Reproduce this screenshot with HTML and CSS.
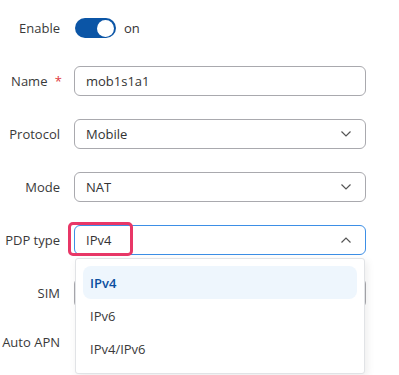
FILE: index.html
```html
<!DOCTYPE html>
<html>
<head>
<meta charset="utf-8">
<link rel="stylesheet" href="styles.css">
</head>
<body>
<div class="form">
  <div class="row">
    <div class="label">Enable</div>
    <div class="control toggle-wrap">
      <span class="toggle on"><span class="knob"></span></span>
      <span class="toggle-text">on</span>
    </div>
  </div>
  <div class="row">
    <div class="label">Name <span class="req">*</span></div>
    <div class="control"><div class="input">mob1s1a1</div></div>
  </div>
  <div class="row">
    <div class="label">Protocol</div>
    <div class="control"><div class="input select">Mobile<svg class="chev" width="10" height="6" viewBox="0 0 10 6"><path d="M0.5 0.5 L5 5 L9.5 0.5" fill="none" stroke="#555" stroke-width="1.2"/></svg></div></div>
  </div>
  <div class="row">
    <div class="label">Mode</div>
    <div class="control"><div class="input select">NAT<svg class="chev" width="10" height="6" viewBox="0 0 10 6"><path d="M0.5 0.5 L5 5 L9.5 0.5" fill="none" stroke="#555" stroke-width="1.2"/></svg></div></div>
  </div>
  <div class="row">
    <div class="label">PDP type</div>
    <div class="control pdp">
      <div class="input select open">IPv4<svg class="chev" width="10" height="6" viewBox="0 0 10 6"><path d="M0.5 5.5 L5 1 L9.5 5.5" fill="none" stroke="#555" stroke-width="1.2"/></svg></div>
      <div class="highlight"></div>
      <div class="menu">
        <div class="item active">IPv4</div>
        <div class="item">IPv6</div>
        <div class="item">IPv4/IPv6</div>
      </div>
    </div>
  </div>
  <div class="row">
    <div class="label">SIM</div>
    <div class="control"><div class="input select"></div></div>
  </div>
  <div class="row short">
    <div class="label">Auto APN</div>
    <div class="control"></div>
  </div>
</div>
</body>
</html>
```
FILE: styles.css
```css
html, body {
  margin: 0;
  padding: 0;
  background: #fff;
}
body {
  font-family: "Open Sans", "Noto Sans", sans-serif;
  font-size: 13px;
  color: #333;
  min-height: 375px;
}
.form {
  display: flex;
  flex-direction: column;
  gap: 23px;
  padding-top: 13px;
}
.row {
  display: grid;
  grid-template-columns: 60px 292px;
  column-gap: 14px;
  align-items: center;
  height: 30px;
}
.row.short {
  height: 22px;
}
.label {
  text-align: right;
  white-space: nowrap;
  color: #3a3a3a;
}
.req {
  color: #e0393e;
  margin-left: 4px;
  margin-right: -2px;
}
.control {
  position: relative;
  height: 100%;
  display: flex;
  align-items: center;
}
.toggle-wrap {
  gap: 8px;
}
.toggle {
  display: inline-block;
  width: 41px;
  height: 20px;
  border-radius: 10px;
  background: #0b55a6;
  position: relative;
  margin-left: 1px;
}
.knob {
  position: absolute;
  right: 2px;
  top: 1.5px;
  width: 17px;
  height: 17px;
  border-radius: 50%;
  background: #fff;
}
.toggle-text {
  color: #333;
}
.input {
  box-sizing: border-box;
  width: 100%;
  height: 30px;
  border: 1px solid #a9a9ae;
  border-radius: 6px;
  padding: 0 11px;
  display: flex;
  align-items: center;
  color: #333;
  background: #fff;
}
.select {
  justify-content: space-between;
  padding-right: 14px;
}
.select.open {
  border-color: #3d8fe6;
}
.chev {
  display: block;
}
.highlight {
  position: absolute;
  left: -6px;
  top: -3px;
  width: 65px;
  height: 34px;
  box-sizing: border-box;
  border: 3px solid #e83767;
  border-radius: 5px;
}
.menu {
  position: absolute;
  left: 1px;
  right: 1px;
  top: 33px;
  box-sizing: border-box;
  padding: 7px 7px 8px 7px;
  background: #fff;
  border: 1px solid #e1e3e6;
  border-radius: 3px;
  box-shadow: 2px 3px 8px rgba(0, 0, 0, 0.08);
  z-index: 5;
}
.item {
  height: 33px;
  display: flex;
  align-items: center;
  padding-left: 7px;
  border-radius: 8px;
  color: #3a3a3a;
}
.item.active {
  background: #eef6fd;
  color: #0b4f9f;
  font-weight: 600;
}
```
